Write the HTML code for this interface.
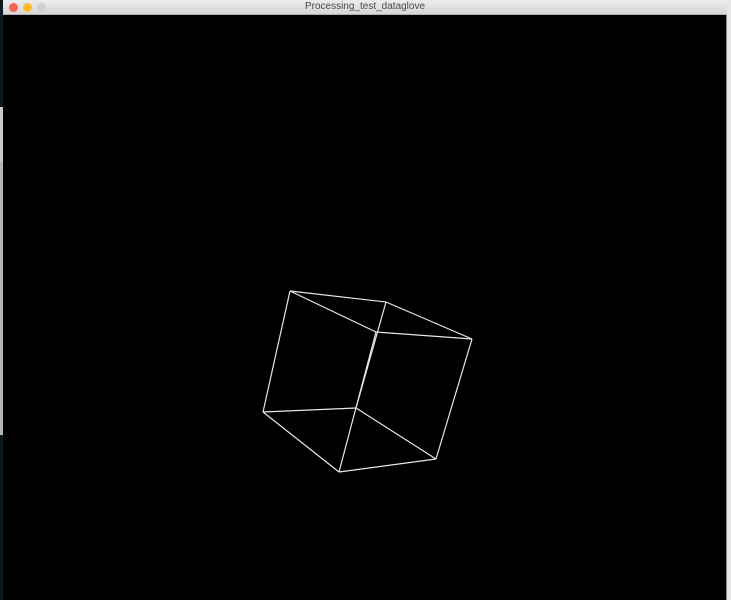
<!DOCTYPE html>
<html><head><meta charset="utf-8"><style>
html,body{margin:0;padding:0;width:731px;height:600px;overflow:hidden;background:#000;position:relative;font-family:"Liberation Sans",sans-serif}
.l1{position:absolute;left:0;top:0;width:3px;height:107px;background:#0b1a1f}
.l2{position:absolute;left:0;top:107px;width:3px;height:328px;background:#b4b4b4}
.l2b{position:absolute;left:0;top:107px;width:3px;height:55px;background:#c8c8c8}
.l3{position:absolute;left:0;top:435px;width:3px;height:165px;background:#0b1a1f}
.r{position:absolute;left:727px;top:0;width:4px;height:600px;background:#e6e6e6}
.rl{position:absolute;left:726px;top:14px;width:1px;height:586px;background:#888}
.tb{position:absolute;left:3px;top:0;width:724px;height:14px;background:linear-gradient(#ececec,#d6d6d6);border-bottom:1px solid #b0b0b0;text-align:center;font-size:10px;line-height:14px;color:#4a4a4a}
.d{position:absolute;top:3px;width:9px;height:9px;border-radius:50%}
</style></head><body>
<div class="l1"></div><div class="l2"></div><div class="l2b"></div><div class="l3"></div>
<div class="r"></div><div class="rl"></div>
<div class="tb">Processing_test_dataglove</div>
<div class="d" style="left:9px;background:#fc5f57"></div>
<div class="d" style="left:23px;background:#fdbc2e"></div>
<div class="d" style="left:37px;background:#d0d0d0"></div>
<svg width="731" height="600" style="position:absolute;left:0;top:0" stroke="#e8e8e8" stroke-width="1.2" fill="none">
<line x1="290" y1="291" x2="386" y2="302"/>
<line x1="386" y1="302" x2="472" y2="339"/>
<line x1="472" y1="339" x2="376" y2="332"/>
<line x1="376" y1="332" x2="290" y2="291"/>
<line x1="290" y1="291" x2="263" y2="412"/>
<line x1="386" y1="302" x2="356" y2="408"/>
<line x1="472" y1="339" x2="436" y2="459"/>
<line x1="376" y1="332" x2="339" y2="472"/>
<line x1="263" y1="412" x2="356" y2="408"/>
<line x1="356" y1="408" x2="436" y2="459"/>
<line x1="436" y1="459" x2="339" y2="472"/>
<line x1="339" y1="472" x2="263" y2="412"/>
</svg>
</body></html>
